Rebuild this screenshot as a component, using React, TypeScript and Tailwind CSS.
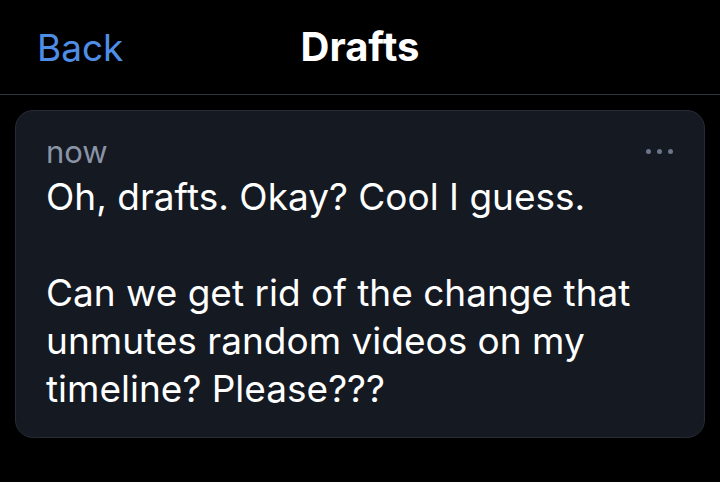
export default function App() {
  return (
    <div className="w-[720px] h-[482px] bg-black text-white overflow-hidden" style={{ fontFamily: 'Inter, "Noto Sans", sans-serif' }}>
      <header className="relative h-[95px] flex items-center border-b border-[#2f333d]">
        <button className="absolute left-[37px] top-[26px] text-[37px] leading-[44px] text-[#4f8ee6]">Back</button>
        <h1 className="w-full text-center text-[40px] leading-[44px] font-bold">Drafts</h1>
      </header>
      <div className="px-[15px] pt-[15px]">
        <div className="rounded-[18px] border border-[#262b35] bg-[#141922] pl-[30px] pr-[30px] pt-[19px] pb-[24px]">
          <div className="flex items-center justify-between">
            <span className="text-[31px] leading-[43px] text-[#8a94a6]">now</span>
            <span className="flex gap-[6px] mr-[1px]">
              <i className="w-[5px] h-[5px] rounded-full bg-[#6b7689]" />
              <i className="w-[5px] h-[5px] rounded-full bg-[#6b7689]" />
              <i className="w-[5px] h-[5px] rounded-full bg-[#6b7689]" />
            </span>
          </div>
          <p className="text-[37px] leading-[48px] whitespace-pre-line">
            {"Oh, drafts. Okay? Cool I guess.\n\nCan we get rid of the change that unmutes random videos on my timeline? Please???"}
          </p>
        </div>
      </div>
    </div>
  );
}
